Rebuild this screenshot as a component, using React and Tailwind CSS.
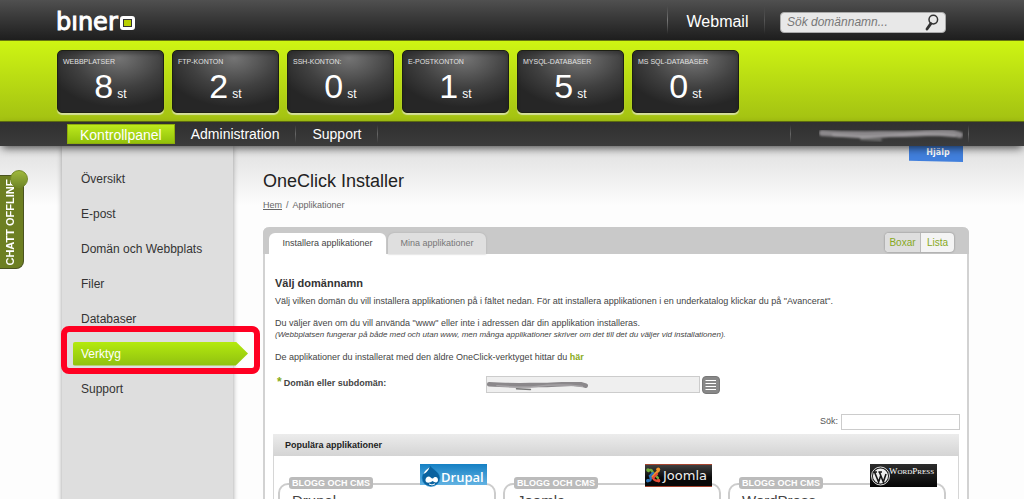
import React, { useState } from "react";

const stats = [
  { label: "WEBBPLATSER", value: 8 },
  { label: "FTP-KONTON", value: 2 },
  { label: "SSH-KONTON:", value: 0 },
  { label: "E-POSTKONTON", value: 1 },
  { label: "MYSQL-DATABASER", value: 5 },
  { label: "MS SQL-DATABASER", value: 0 },
];

const menu = [
  "Översikt",
  "E-post",
  "Domän och Webbplats",
  "Filer",
  "Databaser",
  "Verktyg",
  "Support",
];

const Divider = () => (
  <span className="w-px h-[18px] bg-gradient-to-b from-transparent via-[#666] to-transparent" />
);

const Smudge = ({ className }) => (
  <svg className={className} viewBox="0 0 144 16" preserveAspectRatio="none" aria-hidden="true">
    <defs>
      <filter id="smudge" x="-5%" y="-30%" width="110%" height="160%">
        <feGaussianBlur stdDeviation="0.8" />
      </filter>
    </defs>
    <g filter="url(#smudge)" fill="none" strokeLinecap="round">
      <path d="M3 7 C30 9 55 8 80 8 S120 5 134 7 L141 9" stroke="#8b888b" strokeWidth="6" />
      <path d="M14 9 C40 11 52 12 70 10 S110 7 136 10" stroke="#a5a2a5" strokeWidth="2" />
      <path d="M42 13 L62 14" stroke="#777" strokeWidth="2" />
    </g>
  </svg>
);

const Header = () => (
  <header className="bg-gradient-to-b from-[#505050] to-[#1e1e1e] border-b border-[#66760f]">
    <div className="max-w-[914px] mx-auto h-10 pl-px pr-[23px] flex items-center">
      <a
        href="#"
        aria-label="binero"
        className="flex items-end text-white text-2xl leading-6 font-['DejaVu_Sans',sans-serif]"
      >
        <span className="pt-1 [-webkit-text-stroke:1px_#fff]">bıner</span>
        <span className="ml-0.5 mb-1 w-[15px] h-[14px] rounded-[3px] border-[3px] border-white p-px bg-[#333]">
          <span className="block w-full h-full bg-[#b9d000]" />
        </span>
      </a>

      <div className="ml-auto flex items-center h-full">
        <span className="w-px h-7 bg-gradient-to-b from-transparent via-[#777] to-transparent" />
        <a href="#" className="w-24 pt-[3px] pl-[3px] text-center text-white text-base leading-6">
          Webmail
        </a>
        <span className="w-px h-7 bg-gradient-to-b from-transparent via-[#555] to-transparent" />
        <form className="ml-[15px] mt-1 w-[166px] h-[21px] flex items-center rounded bg-[#e8e8e8] border border-[#aaa]">
          <input
            type="text"
            aria-label="Sök domännamn"
            placeholder="Sök domännamn..."
            className="flex-1 min-w-0 pl-1.5 bg-transparent text-xs italic outline-none placeholder:text-[#777]"
          />
          <button type="button" aria-label="Sök" className="w-5 h-5 flex items-center">
            <svg className="w-[14px] h-[17px]" viewBox="0 0 14 17" fill="none" stroke="#333">
              <circle cx="8.3" cy="5.6" r="4.3" strokeWidth="1.5" />
              <path d="M5.8 9.6 L2 15" strokeWidth="2.8" strokeLinecap="round" />
            </svg>
          </button>
        </form>
      </div>
    </div>
  </header>
);

const StatCard = ({ label, value }) => (
  <div className="w-[107px] h-[63px] pt-[7px] px-[5px] rounded-[5px] border border-[#1d1f14] bg-[radial-gradient(ellipse_70%_80%_at_58%_12%,#747474,#404040_60%,#262626)] shadow-[0_2px_1px_#d5df9b,inset_0_3px_3px_#2226]">
    <p className="text-[7px] leading-2 text-[#e2e2e2]">{label}</p>
    <p className="pt-1 text-center text-white leading-8">
      <span className="text-[34px]">{value}</span>
      <span className="ml-1 text-xs">st</span>
    </p>
  </div>
);

const TopNav = () => (
  <nav className="relative z-10 border-t border-[#5c6b10] bg-gradient-to-b from-[#303030] to-[#3b3b3b] shadow-[0_4px_8px_-2px_#000a]">
    <div className="max-w-[914px] mx-auto h-6 pl-3 flex items-center text-sm text-white">
      <a
        href="#"
        className="h-5 px-3 leading-5 border border-[#8fae0b] bg-gradient-to-b from-[#bdea1c] to-[#92c10a]"
      >
        Kontrollpanel
      </a>
      <a href="#" className="px-4">
        Administration
      </a>
      <Divider />
      <a href="#" className="px-4">
        Support
      </a>
      <Divider />
      <div className="ml-auto flex items-center">
        <Divider />
        <Smudge className="ml-7 mr-[5px] w-36 h-4" />
        <Divider />
      </div>
    </div>
  </nav>
);

const Sidebar = () => (
  <aside className="ml-[7px] w-[171px] shrink-0 pt-[15px] bg-[#dedede] shadow-[0_0_5px_#999]">
    <ul>
      {menu.map((item) => (
        <li key={item} className="relative h-[35px] flex items-center pl-[11px]">
          {item === "Verktyg" ? (
            <>
              <a
                href="#"
                className="relative z-10 w-[175px] h-6 shrink-0 pl-2 leading-6 text-xs text-white rounded-xs bg-gradient-to-b from-[#b4ea0e] to-[#8fc010] [clip-path:polygon(0_0,93%_0,100%_50%,93%_100%,0_100%)]"
              >
                {item}
              </a>
              <span className="absolute z-10 -top-2.5 -left-px w-[199px] h-12 rounded-lg border-6 border-[#ff0022] pointer-events-none" />
            </>
          ) : (
            <a href="#" className="pl-2 text-xs text-[#333]">
              {item}
            </a>
          )}
        </li>
      ))}
    </ul>
  </aside>
);

const DrupalLogo = () => (
  <svg className="w-[67px] h-[23px]" viewBox="0 0 67 23">
    <defs>
      <linearGradient id="drupalBg" x1="0" y1="0" x2="0" y2="1">
        <stop offset="0" stopColor="#1580c4" />
        <stop offset="1" stopColor="#62b2e2" />
      </linearGradient>
    </defs>
    <rect width="67" height="21" fill="url(#drupalBg)" />
    <path
      d="M10 1 C12 5 20 8 20 14 A9 8.5 0 0 1 2 14 C2 8 9 6 10 1 Z"
      fill="#0a629f"
      stroke="#1b8bd0"
      strokeWidth="0.6"
    />
    <path d="M3.5 10 C5 6 8 5 9.5 3 C9 6 6 9 3.5 10 Z" fill="#fff" />
    <path
      d="M7 13 C10 11 11 15 13 14.5 C15 12 18 13 18 16 C18 19 15 19 12.5 17 C10 19 6 19.5 5.5 16.5 C5.4 15 6 14 7 13 Z"
      fill="#fff"
    />
    <path d="M9 20 Q12 22 15 19.8" stroke="#fff" fill="none" />
    <text x="21" y="18" fill="#fff" fontSize="13" fontWeight="600" fontFamily="Open Sans, sans-serif">
      Drupal
    </text>
  </svg>
);

const JoomlaLogo = () => (
  <svg className="w-[67px] h-[23px]" viewBox="0 0 67 23">
    <defs>
      <linearGradient id="joomlaBg" x1="0" y1="0" x2="0" y2="1">
        <stop offset="0" stopColor="#444" />
        <stop offset="0.6" stopColor="#090909" />
        <stop offset="1" stopColor="#090909" />
      </linearGradient>
    </defs>
    <rect width="67" height="23" fill="url(#joomlaBg)" />
    <path d="M0 0.5 H67 M0 22.5 H67" stroke="#a6442f" />
    <g fill="none" strokeWidth="2.4" strokeLinecap="round">
      <path d="M3.5 7 C5 5 7 6 7.5 8 L13 14" stroke="#73ad3a" />
      <path d="M12.5 5.5 C14 5 14.5 7 12 8 L6 14" stroke="#f2942e" />
      <path d="M3 16 C5 18 7 15 5 12 L8 9" stroke="#2b72b8" />
      <path d="M13.5 16 C12 18 9 16 8 14 L12 10" stroke="#e64b35" />
    </g>
    <g>
      <circle cx="3" cy="6" r="1.8" fill="#73ad3a" />
      <circle cx="13.3" cy="5.3" r="1.8" fill="#f2942e" />
      <circle cx="2.8" cy="16.8" r="1.8" fill="#2b72b8" />
      <circle cx="13.6" cy="16.8" r="1.8" fill="#e64b35" />
    </g>
    <text x="18" y="16" fill="#eee" fontSize="13" fontFamily="DejaVu Sans, sans-serif">
      Joomla
    </text>
  </svg>
);

const WordPressLogo = () => (
  <svg className="w-[67px] h-[23px]" viewBox="0 0 67 23">
    <defs>
      <linearGradient id="wpBg" x1="0" y1="0" x2="0" y2="1">
        <stop offset="0" stopColor="#2d2d2d" />
        <stop offset="1" stopColor="#050505" />
      </linearGradient>
    </defs>
    <rect width="67" height="23" fill="url(#wpBg)" />
    <circle cx="10.5" cy="12" r="9" fill="#151515" stroke="#ddd" />
    <circle cx="10.5" cy="12" r="7.6" fill="#eee" />
    <path
      d="M4.5 8 L8.6 18 L10.8 11.5 M9.4 8 L13.3 18 L16 10 M3.5 8 H7 M8.4 8 H12"
      stroke="#151515"
      strokeWidth="1.6"
      fill="none"
    />
    <text x="19" y="10" fill="#fff" fontSize="9" fontFamily="Liberation Serif, serif">
      W<tspan fontSize="7">ORD</tspan>P<tspan fontSize="7">RESS</tspan>
    </text>
  </svg>
);

const apps = [
  { name: "Drupal", Logo: DrupalLogo },
  { name: "Joomla", Logo: JoomlaLogo },
  { name: "WordPress", Logo: WordPressLogo },
];

const AppCard = ({ name, Logo }) => (
  <article className="relative flex-1 h-28 px-3 pt-2 rounded-[10px] border-2 border-[#ccc] bg-white">
    <span className="absolute -top-2 left-[9px] px-[3px] h-3 leading-3 rounded-[3px] bg-[#bbb] text-white text-[9px] font-bold">
      BLOGG OCH CMS
    </span>
    <span className="absolute -top-[21px] right-[7px]">
      <Logo />
    </span>
    <h3 className="text-[15px] leading-4 text-[#444]">{name}</h3>
  </article>
);

const Installer = () => {
  const [view, setView] = useState("Boxar");

  return (
    <section className="mt-4 rounded-t-md border-x-2 border-[#d2d2d2] bg-white">
      {/* Tabs */}
      <div className="-mx-0.5 h-[27px] pl-1.5 pr-[15px] flex items-end rounded-t-md bg-[#c9c9c9] text-[9px]">
        <button type="button" className="w-[117px] h-[21px] rounded-t-md bg-white text-[#444]">
          Installera applikationer
        </button>
        <button
          type="button"
          className="ml-0.5 w-[98px] h-[21px] rounded-t-md bg-[#dfdfdf] text-[#777] shadow-[0_0_2px_#aaa]"
        >
          Mina applikationer
        </button>
        <div className="ml-auto mb-0.5 flex rounded bg-[#f4f4f4] text-[10px] text-[#87a922] shadow-[0_0_2px_#777]">
          {["Boxar", "Lista"].map((name) => (
            <button
              key={name}
              type="button"
              onClick={() => setView(name)}
              className={
                view === name
                  ? "w-9 h-[19px] rounded-l bg-[#dedede] border-r border-[#bbb]"
                  : "w-[33px] h-[19px]"
              }
            >
              {name}
            </button>
          ))}
        </div>
      </div>

      {/* Intro */}
      <div className="px-2.5 pt-5 text-[9px] leading-3 text-[#444]">
        <h2 className="pt-px text-[11px] leading-4 font-bold text-[#333]">Välj domännamn</h2>
        <p className="pt-1">
          Välj vilken domän du vill installera applikationen på i fältet nedan. För att installera
          applikationen i en underkatalog klickar du på "Avancerat".
        </p>
        <p className="pt-2.5">
          Du väljer även om du vill använda "www" eller inte i adressen där din applikation
          installeras.
        </p>
        <p className="text-[8px] italic">
          (Webbplatsen fungerar på både med och utan www, men många applikationer skriver om det till
          det du väljer vid installationen).
        </p>
        <p className="pt-2.5">
          De applikationer du installerat med den äldre OneClick-verktyget hittar du{" "}
          <a href="#" className="font-bold text-[#87ab1a]">
            här
          </a>
        </p>
      </div>

      {/* Domain */}
      <div className="pt-[13px] pl-3 flex items-start text-[9px]">
        <label htmlFor="domain" className="w-[209px] leading-3 font-bold text-[#444]">
          <span className="mr-0.5 text-xs leading-3 text-[#87ab1a]">*</span>
          Domän eller subdomän:
        </label>
        <div className="relative">
          <input
            id="domain"
            type="text"
            className="block w-[214px] h-[17px] px-1 bg-[#efefef] border border-[#ccc]"
          />
          <Smudge className="absolute top-[3px] left-px w-[101px] h-3 pointer-events-none" />
        </div>
        <button
          type="button"
          aria-label="Välj domän"
          className="ml-0.5 w-[18px] h-[18px] rounded-sm border border-[#777] bg-[#888] flex items-center justify-center"
        >
          <svg className="w-3 h-3" viewBox="0 0 12 12" stroke="#fff" strokeWidth="1.2">
            <path d="M0.5 1.5 H11 M0.5 4.5 H11 M0.5 7.5 H11 M0.5 10.5 H11" />
          </svg>
        </button>
      </div>

      <div className="pt-5 pr-[7px] flex items-center justify-end gap-[3px] text-[9px] text-[#555]">
        <label htmlFor="search">Sök:</label>
        <input id="search" type="text" className="w-[119px] h-4 px-1 bg-white border border-[#ccc]" />
      </div>

      {/* Popular apps */}
      <div className="mt-1 mx-2">
        <h2 className="h-[22px] pl-3 leading-[22px] text-[9px] font-bold text-[#222] bg-gradient-to-b from-[#ececec] to-[#d4d4d4]">
          Populära applikationer
        </h2>
        <div className="pt-[27px] pl-1 pr-3 pb-5 flex gap-[7px] border-x border-[#d6d6d6]">
          {apps.map((app) => (
            <AppCard key={app.name} name={app.name} Logo={app.Logo} />
          ))}
        </div>
      </div>
    </section>
  );
};

const App = () => {
  return (
    <div className="min-h-screen bg-[#fdfdfd] font-['Liberation_Sans',Arial,sans-serif]">
      <Header />

      <div className="bg-gradient-to-b from-[#cef513] to-[#a3c112]">
        <div className="max-w-[914px] mx-auto h-20 pt-[9px] pl-[2px] flex gap-2">
          {stats.map((stat) => (
            <StatCard key={stat.label} label={stat.label} value={stat.value} />
          ))}
        </div>
      </div>

      <TopNav />

      <div className="bg-gradient-to-b from-[#e0e0e0] to-[#fdfdfd] to-[60px]">
        <div className="relative max-w-[914px] mx-auto flex">
          <Sidebar />
          <main className="ml-[30px] flex-1 min-w-0 pt-[23px]">
            <h1 className="text-lg leading-6 text-[#222]">OneClick Installer</h1>
            <p className="pt-[6px] text-[9px] leading-3 text-[#666]">
              <a href="#" className="underline">
                Hem
              </a>
              <span className="px-1">/</span>
              Applikationer
            </p>
            <Installer />
          </main>
          <a
            href="#"
            className="absolute top-0 right-[6px] w-[54px] h-4 pl-1 text-center leading-[14px] text-[8px] font-bold text-white font-['DejaVu_Sans',sans-serif] bg-[#417fdc] [clip-path:polygon(0_0,100%_0,100%_100%,0_92%)]"
          >
            Hjälp
          </a>
        </div>
      </div>

      {/* Chat tab */}
      <button
        type="button"
        className="fixed left-0 top-[175px] w-6 h-[94px] flex items-end rounded-r-lg border border-l-0 border-[#4a5320] bg-[#6d7f22] text-white text-[11px] font-bold"
      >
        <span className="pr-0.5 pt-0.5 rotate-180 [writing-mode:vertical-rl] whitespace-nowrap">
          CHATT OFFLINE
        </span>
        <span className="absolute -top-1.5 -right-[5px] w-[18px] h-[18px] rounded-full border border-[#748928] bg-gradient-to-b from-[#9fb83c] to-[#71882a]" />
      </button>
    </div>
  );
};

export default App;
